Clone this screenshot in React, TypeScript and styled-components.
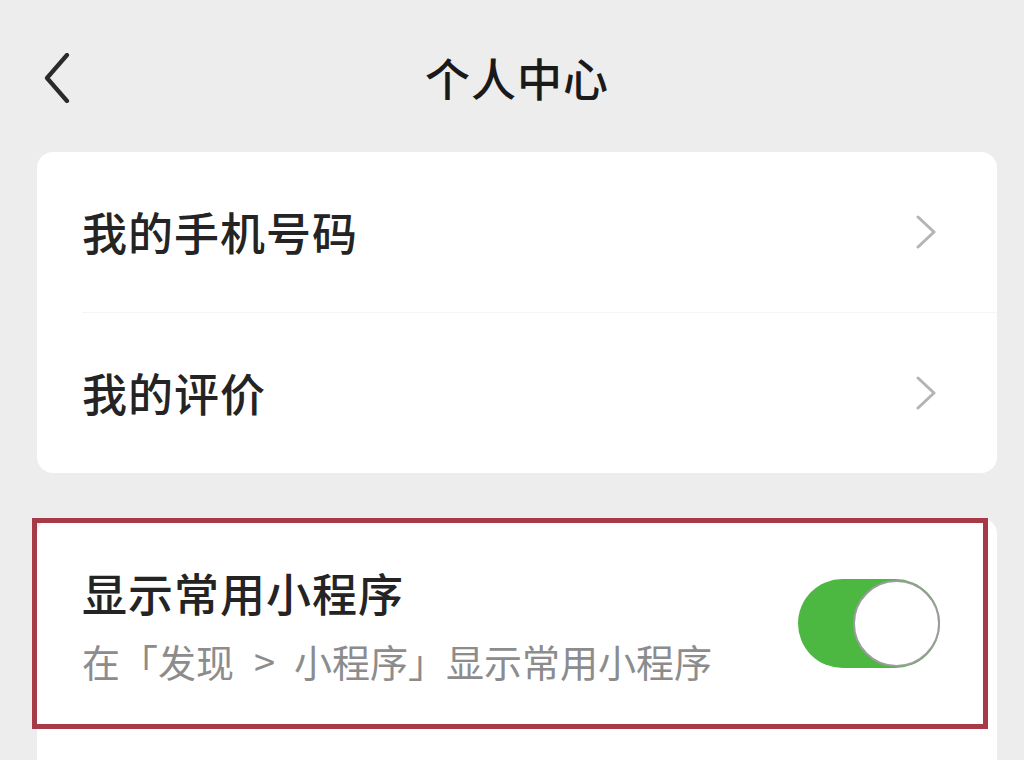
import React from "react";
import styled, { createGlobalStyle } from "styled-components";

const GlobalStyle = createGlobalStyle`
  html, body {
    margin: 0;
    padding: 0;
    background: #ededed;
    overflow: hidden;
  }
  body {
    font-family: "Noto Sans CJK SC", "Noto Sans", sans-serif;
    color: #1d1d1d;
  }
`;

const Page = styled.div`
  width: 1024px;
  height: 760px;
  box-sizing: border-box;
  padding: 0 27px 0 37px;
  background: #ededed;
  overflow: hidden;
`;

const Header = styled.header`
  display: grid;
  grid-template-columns: 80px 1fr 80px;
  align-items: center;
  height: 48px;
  padding-top: 54px;
  margin-bottom: 50px;
`;

const BackButton = styled.button`
  display: flex;
  align-items: center;
  justify-content: flex-start;
  padding: 0 0 0 5px;
  margin: 0;
  border: none;
  background: transparent;
  height: 48px;
  cursor: pointer;
`;

const Title = styled.h1`
  margin: 0;
  text-align: center;
  font-size: 45px;
  line-height: 48px;
  font-weight: 500;
  color: #1a1a1a;
  letter-spacing: 1px;
`;

const Card = styled.section<{ $open?: boolean }>`
  background: #ffffff;
  border-radius: ${(p) => (p.$open ? "16px 16px 0 0" : "16px")};
  display: flex;
  flex-direction: column;
`;

const Gap = styled.div`
  height: 45px;
`;

const Row = styled.div`
  display: flex;
  align-items: center;
  justify-content: space-between;
  height: 160px;
  padding: 0 60px 0 45px;
`;

const Divider = styled.div`
  height: 1px;
  margin-left: 45px;
  background: #f5f5f5;
`;

const Label = styled.span`
  font-size: 45px;
  line-height: 56px;
  font-weight: 500;
  color: #242424;
  letter-spacing: 1px;
`;

const HighlightRow = styled.div`
  display: flex;
  align-items: center;
  justify-content: space-between;
  height: 211px;
  box-sizing: border-box;
  margin: 0 9px 0 -5px;
  padding: 0 43px 0 45px;
  border: 5px solid #a63a46;
`;

const TextBlock = styled.div`
  display: flex;
  flex-direction: column;
  gap: 18px;
`;

const SubLabel = styled.span`
  font-size: 38px;
  line-height: 44px;
  font-weight: 400;
  color: #8c8c8c;
  white-space: nowrap;
`;

const Sep = styled.span`
  display: inline-block;
  margin: 0 19px 0 20px;
`;

const Toggle = styled.div<{ $on: boolean }>`
  width: 142px;
  height: 89px;
  border-radius: 45px;
  background: ${(p) => (p.$on ? "#4cb842" : "#e5e5e5")};
  display: flex;
  align-items: center;
  justify-content: ${(p) => (p.$on ? "flex-end" : "flex-start")};
  box-sizing: border-box;
`;

const Knob = styled.div`
  width: 87px;
  height: 87px;
  border-radius: 50%;
  background: #ffffff;
  border: 2px solid #9c9c9c;
  box-sizing: border-box;
`;

const Filler = styled.div`
  height: 60px;
`;

const ChevronLeft = () => (
  <svg width="30" height="50" viewBox="0 0 30 50" fill="none">
    <path d="M25 2 L5 25 L25 48" stroke="#2a2a2a" strokeWidth="4.2" strokeLinecap="round" strokeLinejoin="round" />
  </svg>
);

const ChevronRight = () => (
  <svg width="22" height="34" viewBox="0 0 22 34" fill="none">
    <path d="M3 2 L19 17 L3 32" stroke="#b4b4b4" strokeWidth="3" strokeLinecap="round" strokeLinejoin="round" />
  </svg>
);

export default function App() {
  return (
    <>
      <GlobalStyle />
      <Page>
        <Header>
          <BackButton aria-label="返回">
            <ChevronLeft />
          </BackButton>
          <Title>个人中心</Title>
          <span />
        </Header>

        <Card>
          <Row>
            <Label>我的手机号码</Label>
            <ChevronRight />
          </Row>
          <Divider />
          <Row>
            <Label>我的评价</Label>
            <ChevronRight />
          </Row>
        </Card>

        <Gap />

        <Card $open>
          <HighlightRow>
            <TextBlock>
              <Label>显示常用小程序</Label>
              <SubLabel>
                在「发现<Sep>&gt;</Sep>小程序」显示常用小程序
              </SubLabel>
            </TextBlock>
            <Toggle $on>
              <Knob />
            </Toggle>
          </HighlightRow>
          <Filler />
        </Card>
      </Page>
    </>
  );
}
